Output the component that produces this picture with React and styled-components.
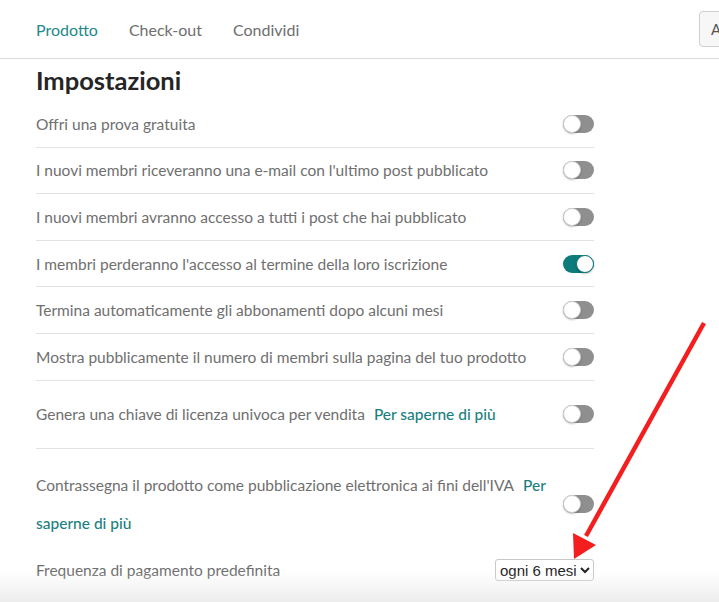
import React, { useState } from "react";
import styled, { createGlobalStyle } from "styled-components";

const GlobalStyle = createGlobalStyle`
  html, body {
    margin: 0;
    padding: 0;
    background: #ffffff;
    overflow: hidden;
  }
  body {
    font-family: "Lato", "Inter", "Noto Sans", sans-serif;
    -webkit-font-smoothing: antialiased;
  }
`;

const Page = styled.div`
  position: relative;
  width: 100%;
  height: 602px;
  overflow: hidden;
  background: #fff;
`;

const Header = styled.header`
  display: flex;
  align-items: center;
  height: 58px;
  padding-left: 36px;
  border-bottom: 1px solid #dcdcdc;
`;

const Tabs = styled.nav`
  display: flex;
  gap: 31px;
  flex: 1;
`;

const Tab = styled.a`
  font-size: 16px;
  color: ${(p) => (p.active ? "#23898a" : "#6e6e6e")};
  text-decoration: none;
  cursor: pointer;
`;

/* the preview button runs past the right edge of the window */
const HeaderButton = styled.button`
  flex: none;
  width: 110px;
  height: 36px;
  margin-right: -90px;
  padding: 0 0 0 11px;
  text-align: left;
  border: 1px solid #cfcfcf;
  border-radius: 4px;
  background: #f7f7f7;
  font-family: inherit;
  font-size: 15px;
  color: #555;
  white-space: nowrap;
`;

const Main = styled.main`
  padding-left: 36px;
  width: 558px;
`;

const Title = styled.h2`
  margin: 7px 0 7px;
  font-size: 25.5px;
  line-height: 28px;
  font-weight: 700;
  color: #252525;
`;

const Row = styled.div`
  display: flex;
  align-items: center;
  justify-content: space-between;
  gap: 16px;
  padding: ${(p) => p.pad || "11.8px 0"};
  line-height: ${(p) => p.lh || "22px"};
  border-bottom: ${(p) => (p.last ? "none" : "1px solid #e2e2e2")};
  font-size: 15.5px;
  color: #6f6f6f;
`;

const Label = styled.span`
  flex: 1;
`;

const More = styled.a`
  margin-left: 9px;
  color: #1b7f80;
  font-weight: 500;
  text-decoration: none;
  cursor: pointer;
`;

const Track = styled.button`
  position: relative;
  flex: none;
  width: 31px;
  height: 18px;
  padding: 0;
  border: none;
  border-radius: 9px;
  background: ${(p) => (p.on ? "#0e7b7b" : "#8f8f8f")};
  cursor: pointer;
`;

const Knob = styled.span`
  position: absolute;
  top: 0;
  left: ${(p) => (p.on ? "13px" : "0")};
  width: 18px;
  height: 18px;
  box-sizing: border-box;
  border-radius: 50%;
  background: #fff;
  border: 1px solid ${(p) => (p.on ? "#0e7b7b" : "#cfcfcf")};
  box-shadow: 0 1px 2px rgba(0, 0, 0, 0.25);
`;

const Select = styled.select`
  height: 22px;
  padding: 0;
  border: 1px solid #c8c8c8;
  border-radius: 3px;
  background: #fff;
  font-family: "Liberation Sans", Arial, sans-serif;
  font-size: 15px;
  color: #222;
`;

const BottomFade = styled.div`
  position: absolute;
  left: 0;
  right: 0;
  bottom: 0;
  height: 30px;
  background: linear-gradient(to bottom, rgba(238, 238, 238, 0), #ececec);
  pointer-events: none;
`;

const Arrow = styled.svg`
  position: absolute;
  left: 0;
  top: 0;
  pointer-events: none;
`;

function Toggle({ initial }) {
  const [on, setOn] = useState(initial);
  return (
    <Track on={on} onClick={() => setOn(!on)}>
      <Knob on={on} />
    </Track>
  );
}

const settings = [
  { text: "Offri una prova gratuita" },
  { text: "I nuovi membri riceveranno una e-mail con l'ultimo post pubblicato" },
  { text: "I nuovi membri avranno accesso a tutti i post che hai pubblicato" },
  { text: "I membri perderanno l'accesso al termine della loro iscrizione", on: true },
  { text: "Termina automaticamente gli abbonamenti dopo alcuni mesi" },
  { text: "Mostra pubblicamente il numero di membri sulla pagina del tuo prodotto" },
];

export default function App() {
  return (
    <Page>
      <GlobalStyle />
      <Header>
        <Tabs>
          <Tab active>Prodotto</Tab>
          <Tab>Check-out</Tab>
          <Tab>Condividi</Tab>
        </Tabs>
        <HeaderButton>A</HeaderButton>
      </Header>
      <Main>
        <Title>Impostazioni</Title>
        {settings.map((s) => (
          <Row key={s.text}>
            <Label>{s.text}</Label>
            <Toggle initial={!!s.on} />
          </Row>
        ))}
        <Row pad="14.5px 0" lh="38px">
          <Label>
            Genera una chiave di licenza univoca per vendita
            <More>Per saperne di più</More>
          </Label>
          <Toggle initial={false} />
        </Row>
        <Row pad="17px 0 8.5px" lh="38px" last>
          <Label>
            Contrassegna il prodotto come pubblicazione elettronica ai fini dell'IVA
            <More>
              Per
              <br />
              saperne di più
            </More>
          </Label>
          <Toggle initial={false} />
        </Row>
        <Row pad="9px 0" last>
          <Label>Frequenza di pagamento predefinita</Label>
          <Select defaultValue="6">
            <option value="1">ogni mese</option>
            <option value="3">ogni 3 mesi</option>
            <option value="6">ogni 6 mesi</option>
            <option value="12">ogni anno</option>
          </Select>
        </Row>
      </Main>
      <BottomFade />
      <Arrow width="719" height="602" viewBox="0 0 719 602">
        <line x1="704" y1="323" x2="586" y2="536" stroke="#f41e1e" strokeWidth="4.5" />
        <polygon points="573,533 596,545 574,559" fill="#f41e1e" />
      </Arrow>
    </Page>
  );
}
